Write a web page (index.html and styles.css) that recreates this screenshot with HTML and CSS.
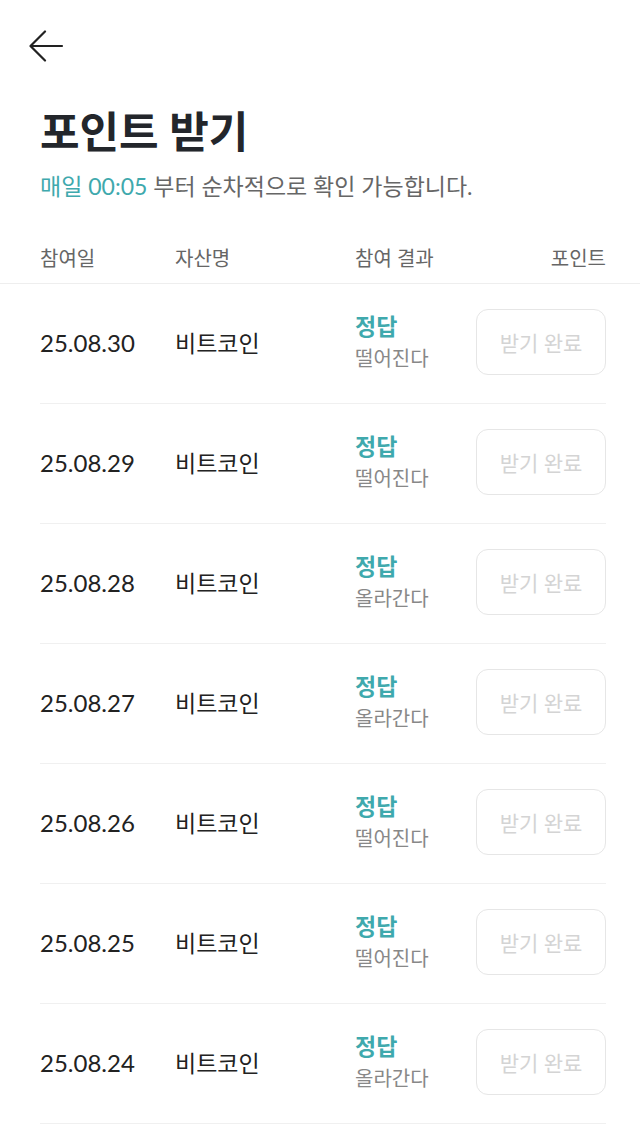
FILE: index.html
```html
<!DOCTYPE html>
<html lang="ko">
<head>
<meta charset="utf-8">
<link rel="stylesheet" href="styles.css">
</head>
<body>
<div class="page">
  <div class="topbar">
    <button class="back" aria-label="뒤로">
      <svg width="36" height="36" viewBox="0 0 36 36"><path d="M34 16H3M17 1.5L2.5 16 17 30.5" fill="none" stroke="#222" stroke-width="2.2" stroke-linecap="round" stroke-linejoin="round"/></svg>
    </button>
  </div>
  <h1 class="title">포인트 받기</h1>
  <p class="subtitle"><span class="accent">매일 00:05</span> 부터 순차적으로 확인 가능합니다.</p>

  <div class="thead">
    <span class="c-date">참여일</span>
    <span class="c-asset">자산명</span>
    <span class="c-result">참여 결과</span>
    <span class="c-point">포인트</span>
  </div>

  <div class="list">
    <div class="row"><span class="c-date date">25.08.30</span><span class="c-asset asset">비트코인</span><div class="c-result result"><b>정답</b><span>떨어진다</span></div><div class="c-point"><span class="btn">받기 완료</span></div></div>
    <div class="row"><span class="c-date date">25.08.29</span><span class="c-asset asset">비트코인</span><div class="c-result result"><b>정답</b><span>떨어진다</span></div><div class="c-point"><span class="btn">받기 완료</span></div></div>
    <div class="row"><span class="c-date date">25.08.28</span><span class="c-asset asset">비트코인</span><div class="c-result result"><b>정답</b><span>올라간다</span></div><div class="c-point"><span class="btn">받기 완료</span></div></div>
    <div class="row"><span class="c-date date">25.08.27</span><span class="c-asset asset">비트코인</span><div class="c-result result"><b>정답</b><span>올라간다</span></div><div class="c-point"><span class="btn">받기 완료</span></div></div>
    <div class="row"><span class="c-date date">25.08.26</span><span class="c-asset asset">비트코인</span><div class="c-result result"><b>정답</b><span>떨어진다</span></div><div class="c-point"><span class="btn">받기 완료</span></div></div>
    <div class="row"><span class="c-date date">25.08.25</span><span class="c-asset asset">비트코인</span><div class="c-result result"><b>정답</b><span>떨어진다</span></div><div class="c-point"><span class="btn">받기 완료</span></div></div>
    <div class="row"><span class="c-date date">25.08.24</span><span class="c-asset asset">비트코인</span><div class="c-result result"><b>정답</b><span>올라간다</span></div><div class="c-point"><span class="btn">받기 완료</span></div></div>
  </div>
</div>
</body>
</html>
```
FILE: styles.css
```css
* { box-sizing: border-box; }
html, body { margin: 0; padding: 0; background: #fff; }
body {
  font-family: Lato, "Noto Sans CJK KR", sans-serif;
  color: #222;
  width: 640px;
  overflow: hidden;
}
.page { width: 640px; }
.topbar { height: 94px; padding: 30px 0 0 28px; }
.back {
  width: 36px; height: 36px; padding: 0; border: 0; background: none;
  display: block;
}
.back svg { display: block; }
.title {
  margin: 0;
  padding-left: 40px;
  font-size: 43px;
  font-weight: 700;
  line-height: 76px;
  color: #23262b;
}
.subtitle {
  margin: 0;
  padding-left: 40px;
  font-size: 23px;
  line-height: 32px;
  color: #666;
}
.accent { color: #3fa9ad; }
.thead {
  margin-top: 42px;
  height: 40px;
  display: grid;
  grid-template-columns: 135px 180px 1fr 130px;
  align-items: start;
  padding: 0 34px 0 40px;
  font-size: 20px;
  color: #666;
  line-height: 28px;
  border-bottom: 1px solid #eeeeee;
}
.thead .c-point { text-align: right; }
.list { padding: 0 34px 0 40px; }
.row {
  height: 120px;
  padding-bottom: 3px;
  display: grid;
  grid-template-columns: 135px 180px 1fr 130px;
  align-items: center;
  border-bottom: 1px solid #f0f0f0;
}
.date { font-size: 24px; color: #222; }
.asset { font-size: 23px; color: #222; }
.result { display: flex; flex-direction: column; }
.result b { font-size: 23px; color: #3fa9ad; font-weight: 700; line-height: 32px; }
.result span { font-size: 20px; color: #888; line-height: 32px; }
.c-point { display: flex; justify-content: flex-end; }
.btn {
  width: 130px; height: 66px;
  border: 1px solid #e6e6e6;
  border-radius: 12px;
  display: flex; align-items: center; justify-content: center;
  font-size: 21px;
  color: #d4d4d4;
}
```
